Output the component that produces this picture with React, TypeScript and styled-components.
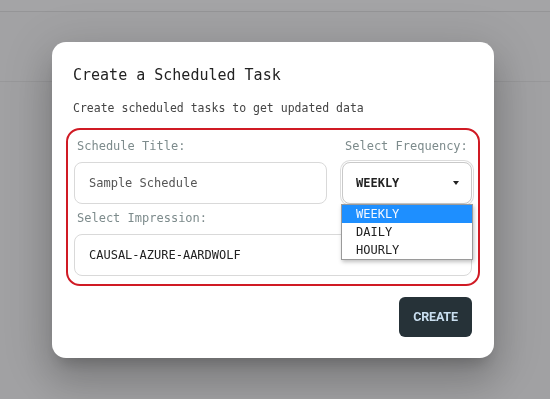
import React from "react"
import styled, { createGlobalStyle } from "styled-components"

const GlobalStyle = createGlobalStyle`
  html, body {
    margin: 0;
    padding: 0;
    background: #a1a1a3;
    font-family: "DejaVu Sans Mono", monospace;
  }
`

const Page = styled.div`
  height: 399px;
  background: #a1a1a3;
`

const TopStrip = styled.div`
  height: 11px;
  background: #a4a4a6;
  border-bottom: 1px solid #959597;
`

const AppBar = styled.div`
  height: 69px;
  background: #a2a2a4;
  border-bottom: 1px solid #98989a;
`

const Backdrop = styled.div`
  position: fixed;
  inset: 0;
  display: flex;
  align-items: center;
  justify-content: center;
  padding-right: 4px;
`

const Modal = styled.div`
  width: 442px;
  box-sizing: border-box;
  background: #fff;
  border-radius: 14px;
  padding: 22px 14px 21px;
  box-shadow: 0 11px 15px -7px rgba(0, 0, 0, 0.2),
    0 24px 38px 3px rgba(0, 0, 0, 0.14), 0 9px 46px 8px rgba(0, 0, 0, 0.12);
`

const Title = styled.h2`
  margin: 0;
  padding: 0 7px;
  font-size: 15px;
  line-height: 22px;
  font-weight: 500;
  color: #222;
`

const Subtitle = styled.p`
  margin: 14px 0 0;
  padding: 0 7px;
  font-size: 11.5px;
  line-height: 16px;
  color: #444;
`

const FormBox = styled.div`
  margin-top: 12px;
  border: 2px solid #d01a24;
  border-radius: 14px;
  padding: 9px 6px 8px;
  display: grid;
  grid-template-columns: 1fr 130px;
  column-gap: 15px;
`

const Field = styled.div<{ $wide?: boolean }>`
  display: flex;
  flex-direction: column;
  grid-column: ${(p) => (p.$wide ? "1 / -1" : "auto")};
  margin-top: ${(p) => (p.$wide ? "7px" : "0")};
  position: relative;
`

const Label = styled.label`
  padding-left: 3px;
  font-size: 12px;
  line-height: 14px;
  color: #7d8b8c;
  margin-bottom: 9px;
  white-space: nowrap;
`

const TextBox = styled.div<{ $dark?: boolean }>`
  height: 42px;
  box-sizing: border-box;
  border: 1px solid #d9d9d9;
  border-radius: 8px;
  padding: 0 14px;
  display: flex;
  align-items: center;
  font-size: 12px;
  color: ${(p) => (p.$dark ? "#222" : "#555")};
`

const SelectBox = styled.div`
  height: 42px;
  box-sizing: border-box;
  border: 1px solid #c9c9c9;
  border-radius: 8px;
  box-shadow: 0 0 0 1px #fff, 0 0 0 2px #dcdcdc;
  padding: 0 12px 0 13px;
  display: flex;
  align-items: center;
  justify-content: space-between;
  font-size: 12px;
  font-weight: bold;
  color: #222;
`

const Caret = styled.span`
  width: 0;
  height: 0;
  border-left: 3.5px solid transparent;
  border-right: 3.5px solid transparent;
  border-top: 4px solid #222;
`

const Menu = styled.ul`
  position: absolute;
  top: 65px;
  left: -1px;
  width: 132px;
  box-sizing: border-box;
  margin: 0;
  padding: 0;
  list-style: none;
  background: #fff;
  border: 1px solid #9a9a9a;
  box-shadow: 1px 2px 4px rgba(0, 0, 0, 0.25);
  z-index: 2;
`

const Option = styled.li<{ $active?: boolean }>`
  height: 18px;
  line-height: 18px;
  padding-left: 14px;
  font-size: 12px;
  background: ${(p) => (p.$active ? "#1e8fff" : "transparent")};
  color: ${(p) => (p.$active ? "#f4f8ff" : "#222")};
`

const Footer = styled.div`
  display: flex;
  justify-content: flex-end;
  margin-top: 11px;
  padding-right: 8px;
`

const CreateButton = styled.button`
  width: 73px;
  height: 40px;
  border: none;
  border-radius: 6px;
  background: #263238;
  color: #c9deef;
  font-family: "Liberation Sans Narrow", "Roboto", sans-serif;
  font-weight: bold;
  font-size: 12.5px;
  letter-spacing: -0.2px;
  cursor: pointer;
`

export default function App() {
  const options = ["WEEKLY", "DAILY", "HOURLY"]
  return (
    <>
      <GlobalStyle />
      <Page>
        <TopStrip />
        <AppBar />
      </Page>
      <Backdrop>
        <Modal>
          <Title>Create a Scheduled Task</Title>
          <Subtitle>Create scheduled tasks to get updated data</Subtitle>
          <FormBox>
            <Field>
              <Label>Schedule Title:</Label>
              <TextBox>Sample Schedule</TextBox>
            </Field>
            <Field>
              <Label>Select Frequency:</Label>
              <SelectBox>
                WEEKLY
                <Caret />
              </SelectBox>
              <Menu>
                {options.map((o) => (
                  <Option key={o} $active={o === "WEEKLY"}>
                    {o}
                  </Option>
                ))}
              </Menu>
            </Field>
            <Field $wide>
              <Label>Select Impression:</Label>
              <TextBox $dark>CAUSAL-AZURE-AARDWOLF</TextBox>
            </Field>
          </FormBox>
          <Footer>
            <CreateButton>CREATE</CreateButton>
          </Footer>
        </Modal>
      </Backdrop>
    </>
  )
}
